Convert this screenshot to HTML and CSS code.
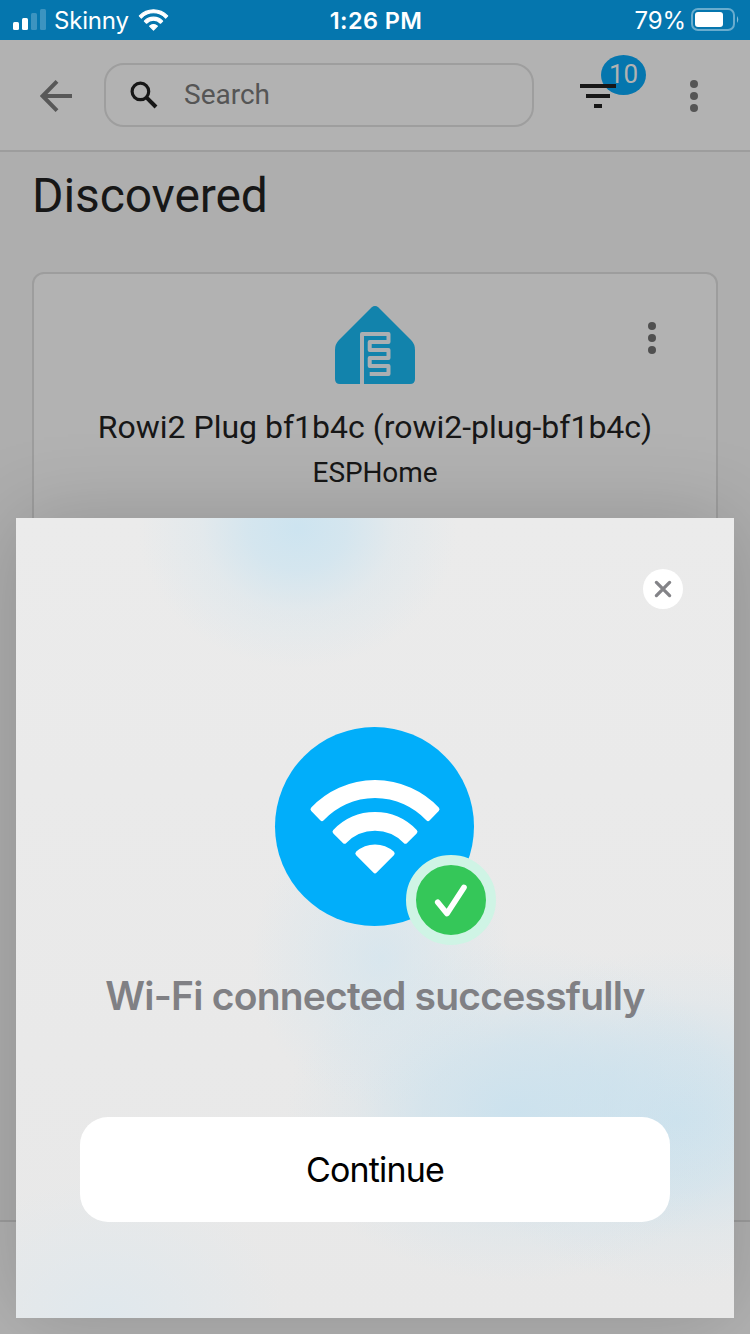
FILE: index.html
```html
<!DOCTYPE html>
<html lang="en">
<head>
<meta charset="utf-8">
<title>Discovered devices</title>
<link rel="stylesheet" href="styles.css">
</head>
<body>
<svg class="defs" aria-hidden="true">
  <symbol id="wifi" viewBox="-66 -95 132 96">
    <g fill="#fff" stroke="#fff" stroke-width="5" stroke-linejoin="round" transform="scale(.975 1)">
      <path d="M-63.6-64.8A89.1 89.1 0 0 1 63.6-64.8L54.4-55.5A75.8 75.8 0 0 0-54.4-55.5Z"/>
      <path d="M-41-42.3A57.5 57.5 0 0 1 41-42.3L31.2-32.8A44.2 44.2 0 0 0-31.2-32.8Z"/>
      <path d="M-17.6-20.5A27 27 0 0 1 17.6-20.5L0-3.2Z"/>
    </g>
  </symbol>
</svg>
<div class="screen">
  <div class="status">
    <div class="carrier">
      <svg class="signal" width="34" height="22" viewBox="0 0 34 22"><g fill="#fff"><rect x="0" y="13" width="6" height="8" rx="1.5"/><rect x="9" y="9" width="6" height="12" rx="1.5"/><g opacity=".22"><rect x="18" y="4" width="6" height="17" rx="1.5"/><rect x="27" y="0" width="6" height="21" rx="1.5"/></g></g></svg>
      <span class="carrier-name">Skinny</span>
      <svg class="status-wifi"><use href="#wifi"/></svg>
    </div>
    <div class="clock">1:26 PM</div>
    <div class="power">
      <span class="percent">79%</span>
      <svg width="48" height="24" viewBox="0 0 48 24"><rect x="1" y="1" width="42" height="21" rx="6" fill="none" stroke="#fff" stroke-opacity=".4" stroke-width="2"/><rect x="4" y="4" width="28" height="15" rx="3" fill="#fff"/><path d="M46 8q2.5 3.5 0 7z" fill="#fff" fill-opacity=".5"/></svg>
    </div>
  </div>
  <header class="toolbar">
    <svg class="back" width="32" height="32" viewBox="0 0 32 32"><path d="M32 16H3M17 1.4L2.6 16 17 30.6" fill="none" stroke="#585858" stroke-width="4"/></svg>
    <div class="search">
      <svg width="28" height="28" viewBox="0 0 28 28"><g fill="none" stroke="#171717"><circle cx="10.4" cy="10.4" r="8.3" stroke-width="3.2"/><path d="M16.6 16.6L26 26" stroke-width="4"/></g></svg>
      <span class="placeholder">Search</span>
    </div>
    <div class="filter">
      <span class="count">10</span>
      <svg class="filter-lines" width="36" height="24" viewBox="0 0 36 24"><path d="M0 0h36v4H0zM6 10h24v4H6zM14 20h8v4h-8z" fill="#171717"/></svg>
    </div>
    <svg class="dots" width="8" height="32" viewBox="0 0 8 32"><g fill="#555"><circle cx="4" cy="4" r="4"/><circle cx="4" cy="16" r="4"/><circle cx="4" cy="28" r="4"/></g></svg>
  </header>
  <main class="content">
    <h1>Discovered</h1>
    <section class="card">
      <svg class="house" width="80" height="79" viewBox="0 0 80 79"><path d="M36.5 1.5Q40-1.3 43.5 1.5L76 34Q80 38 80 44V73Q80 78 75 78H5Q0 78 0 73V44Q0 38 4 34Z" fill="#1283ac"/><path d="M27 78V28H53.5V36H34.7V44H53.5V52H34.7V60H53.5V68H34.7" fill="none" stroke="#abafb2" stroke-width="4" stroke-linejoin="round"/></svg>
      <svg class="dots card-menu" width="8" height="32" viewBox="0 0 8 32"><g fill="#505050"><circle cx="4" cy="4" r="4"/><circle cx="4" cy="16" r="4"/><circle cx="4" cy="28" r="4"/></g></svg>
      <div class="device">Rowi2 Plug bf1b4c (rowi2-plug-bf1b4c)</div>
      <div class="integration">ESPHome</div>
    </section>
  </main>
  <footer class="bottom"></footer>
  <div class="sheet">
    <button class="close" aria-label="Close"><svg width="18" height="18" viewBox="0 0 18 18"><path d="M2.4 2.4L15.6 15.6M15.6 2.4L2.4 15.6" stroke="#838387" stroke-width="3.3" stroke-linecap="round"/></svg></button>
    <div class="emblem">
      <svg class="emblem-wifi"><use href="#wifi"/></svg>
      <div class="check"><svg width="34" height="34" viewBox="0 0 34 34"><path d="M3.7 19.2L12.9 30.6L30 4.4" fill="none" stroke="#fff" stroke-width="5.6" stroke-linecap="round" stroke-linejoin="round"/></svg></div>
    </div>
    <h2>Wi-Fi connected successfully</h2>
    <button class="continue">Continue</button>
  </div>
</div>
</body>
</html>
```

FILE: styles.css
```css
* { box-sizing: border-box; }
body { margin: 0; font-family: Roboto, "Liberation Sans", sans-serif; }
button { border: 0; padding: 0; }
.defs { display: none; }
.screen {
  position: relative;
  width: 750px;
  height: 1334px;
  overflow: hidden;
  display: flex;
  flex-direction: column;
  background: #aeaeae;
  color: #171717;
}
.status {
  height: 40px;
  flex: none;
  display: grid;
  grid-template-columns: 1fr auto 1fr;
  align-items: center;
  padding: 0 11px 0 13px;
  background: #0576ae;
  color: #fff;
  font: 24px/38px Inter, sans-serif;
}
.carrier, .power { display: flex; align-items: center; }
.carrier-name, .clock, .percent { padding-top: 2px; }
.carrier-name { margin-left: 7px; letter-spacing: -.2px; }
.signal { margin-bottom: 1px; }
.status-wifi { width: 31px; height: 22px; margin-left: 9px; }
.clock { font-size: 23.5px; font-weight: 600; letter-spacing: .4px; }
.percent { letter-spacing: -.1px; }
.power { justify-content: flex-end; gap: 5px; }
.toolbar {
  height: 112px;
  flex: none;
  display: flex;
  align-items: center;
  padding-left: 40px;
  background: #b2b2b2;
  border-bottom: 2px solid #9d9d9d;
}
.back, .toolbar > .dots { margin-top: 2px; }
.search {
  width: 430px;
  height: 64px;
  margin-left: 32px;
  padding-left: 24px;
  display: flex;
  align-items: center;
  gap: 26px;
  border: 2px solid #9e9e9e;
  border-radius: 20px;
  font-size: 28px;
  color: #555;
}
.placeholder { padding-bottom: 2px; }
.filter { position: relative; width: 66px; height: 56px; margin-left: 46px; }
.filter-lines { position: absolute; left: 0; top: 17px; }
.count {
  position: absolute;
  left: 21px;
  top: -12px;
  width: 45px;
  height: 40px;
  border-radius: 50%;
  background: #0576ae;
  color: #b2b2b2;
  font-size: 26px;
  line-height: 38px;
  text-align: center;
}
.toolbar > .dots { margin-left: 44px; }
.content { height: 1068px; flex: none; padding: 12px 32px 0; overflow: hidden; }
h1 { margin: 0; font-size: 48px; line-height: 64px; font-weight: 400; letter-spacing: -.1px; }
.card {
  position: relative;
  height: 1100px;
  margin-top: 44px;
  padding-top: 32px;
  display: flex;
  flex-direction: column;
  align-items: center;
  background: #b2b2b2;
  border: 2px solid #9d9d9d;
  border-radius: 12px;
}
.house { display: block; flex: none; }
.card-menu { position: absolute; right: 60px; top: 48px; }
.device { margin-top: 22px; font-size: 32px; line-height: 40px; white-space: nowrap; }
.integration { margin-top: 8px; font-size: 28px; line-height: 36px; letter-spacing: -.1px; }
.bottom { flex: 1; background: #b2b2b2; border-top: 2px solid #9d9d9d; }
.sheet {
  position: absolute;
  left: 16px;
  top: 518px;
  width: 718px;
  height: 800px;
  padding: 51px 51px 0 64px;
  display: flex;
  flex-direction: column;
  box-shadow: 0 0 80px rgba(0, 0, 0, .18);
  background:
    radial-gradient(ellipse 160px 140px at 282px 10px, #cde4f0 0%, rgba(205, 228, 240, .75) 30%, rgba(205, 228, 240, .28) 60%, rgba(205, 228, 240, 0) 100%),
    radial-gradient(ellipse 130px 150px at 365px 440px, rgba(205, 228, 240, .6), rgba(205, 228, 240, .25) 55%, rgba(205, 228, 240, 0)),
    radial-gradient(ellipse 230px 170px at 500px 595px, rgba(201, 225, 238, .9) 0%, rgba(201, 225, 238, .6) 40%, rgba(201, 225, 238, .2) 70%, rgba(201, 225, 238, 0) 100%),
    radial-gradient(ellipse 220px 170px at 660px 600px, rgba(201, 225, 238, .85) 0%, rgba(201, 225, 238, .55) 40%, rgba(201, 225, 238, .18) 70%, rgba(201, 225, 238, 0) 100%),
    radial-gradient(ellipse 180px 140px at 90px 800px, #e0e8ed, rgba(224, 232, 237, 0)),
    linear-gradient(#ebebeb, #e8e8e8);
}
.close {
  align-self: flex-end;
  width: 40px;
  height: 40px;
  border-radius: 50%;
  background: #fff;
  display: grid;
  place-items: center;
}
.emblem {
  position: relative;
  width: 199px;
  height: 199px;
  margin: 118px 0 0 195px;
  border-radius: 50%;
  background: #01aefa;
  display: flex;
  justify-content: center;
}
.emblem-wifi { width: 132px; height: 96px; margin-top: 52px; }
.check {
  position: absolute;
  left: 131px;
  top: 128px;
  width: 90px;
  height: 90px;
  border-radius: 50%;
  border: 10px solid #cff4e5;
  background: #35c759;
  display: grid;
  place-items: center;
}
h2 {
  width: 590px;
  margin: 46px 0 0;
  text-align: center;
  white-space: nowrap;
  font: 600 39px/48px Inter, sans-serif;
  letter-spacing: -.77px;
  color: #808084;
}
.continue {
  width: 590px;
  height: 105px;
  margin-top: 97px;
  border-radius: 28px;
  background: #fff;
  color: #000;
  font: 34px/105px Inter, sans-serif;
  letter-spacing: -.85px;
}
```
